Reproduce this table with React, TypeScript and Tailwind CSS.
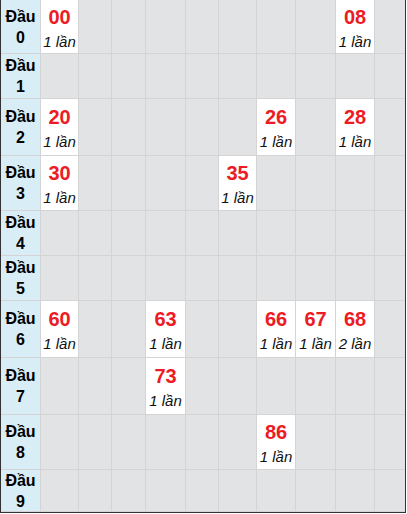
import React from 'react';

// hits per row: column index -> [number, count]
const rows: { h: string; hits: Record<number, [string, number]> }[] = [
  { h: 'h-[54px]', hits: { 0: ['00', 1], 8: ['08', 1] } },
  { h: 'h-[45px]', hits: {} },
  { h: 'h-[57px]', hits: { 0: ['20', 1], 6: ['26', 1], 8: ['28', 1] } },
  { h: 'h-[55px]', hits: { 0: ['30', 1], 5: ['35', 1] } },
  { h: 'h-[45px]', hits: {} },
  { h: 'h-[45px]', hits: {} },
  { h: 'h-[57px]', hits: { 0: ['60', 1], 3: ['63', 1], 6: ['66', 1], 7: ['67', 1], 8: ['68', 2] } },
  { h: 'h-[57px]', hits: { 3: ['73', 1] } },
  { h: 'h-[55px]', hits: { 6: ['86', 1] } },
  { h: 'h-[42px]', hits: {} },
];

const colW = ['w-[38px]', 'w-[33px]', 'w-[34px]', 'w-[40px]', 'w-[33px]', 'w-[38px]', 'w-[39px]', 'w-[40px]', 'w-[39px]', 'w-[30px]'];

export default function App() {
  return (
    <div className="w-[407px] h-[514px] bg-white font-['Liberation_Sans',Arial,sans-serif]">
      <div className="w-[406px] border-l border-r border-b border-[#333]">
        {rows.map((row, r) => (
          <div key={r} className={`flex ${row.h}`}>
            <div className="w-[40px] shrink-0 flex flex-col items-center justify-center bg-[#d9edf7] border-r border-b border-[#d4d4d4] text-[16px] font-bold leading-[21px] text-black">
              <span>Đầu</span>
              <span>{r}</span>
            </div>
            {colW.map((w, c) => {
              const hit = row.hits[c];
              return (
                <div
                  key={c}
                  className={`${w} shrink-0 border-b border-[#d4d4d4] ${c < 9 ? 'border-r' : ''} ${
                    hit ? 'bg-white flex flex-col items-center justify-center' : 'bg-[#e2e3e5]'
                  }`}
                >
                  {hit && (
                    <>
                      <span className="text-[20px] font-bold leading-[29px] text-[#ed1c24]">{hit[0]}</span>
                      <span className="text-[15px] italic leading-[19px] text-[#111] whitespace-nowrap">{hit[1]} lần</span>
                    </>
                  )}
                </div>
              );
            })}
          </div>
        ))}
      </div>
    </div>
  );
}
